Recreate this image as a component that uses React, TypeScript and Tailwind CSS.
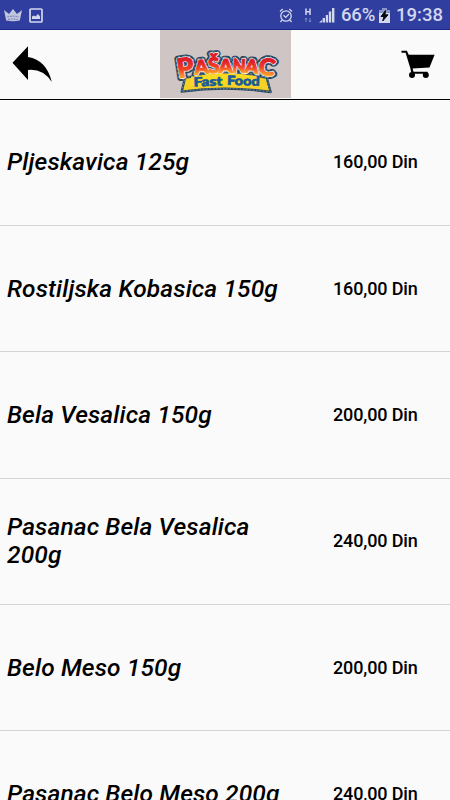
import React from "react";

interface MenuItem {
  name: string;
  price: string;
}

const items: MenuItem[] = [
  { name: "Pljeskavica 125g", price: "160,00 Din" },
  { name: "Rostiljska Kobasica 150g", price: "160,00 Din" },
  { name: "Bela Vesalica 150g", price: "200,00 Din" },
  { name: "Pasanac Bela Vesalica 200g", price: "240,00 Din" },
  { name: "Belo Meso 150g", price: "200,00 Din" },
  { name: "Pasanac Belo Meso 200g", price: "240,00 Din" },
];

// x, baseline, font size, drawn width, tilt
const letters = [
  { char: "P", x: 70, y: 147, size: 80, width: 50, tilt: -9 },
  { char: "A", x: 120, y: 138, size: 58, width: 42, tilt: -5 },
  { char: "Š", x: 160, y: 135, size: 64, width: 34, tilt: -2 },
  { char: "A", x: 191, y: 134, size: 56, width: 42, tilt: 0 },
  { char: "N", x: 232, y: 134, size: 56, width: 39, tilt: 3 },
  { char: "A", x: 268, y: 136, size: 56, width: 41, tilt: 6 },
  { char: "C", x: 307, y: 142, size: 70, width: 49, tilt: 9 },
];

const LogoLetters = (props: React.SVGProps<SVGGElement>) => (
  <g
    fontFamily="Lato, 'Open Sans', sans-serif"
    fontWeight="900"
    strokeLinejoin="round"
    {...props}
  >
    {letters.map((l, i) => (
      <text
        key={i}
        x={l.x}
        y={l.y}
        fontSize={l.size}
        textLength={l.width}
        lengthAdjust="spacingAndGlyphs"
        transform={`rotate(${l.tilt} ${l.x + l.width / 2} ${l.y})`}
      >
        {l.char}
      </text>
    ))}
  </g>
);

const Logo = () => (
  <svg className="h-[68px] w-[131px] bg-[#cec5c4]" viewBox="15 6 393 204">
    <defs>
      <linearGradient id="fire" x1="0" y1="0" x2="0" y2="1">
        <stop offset="0.3" stopColor="#dd1f2a" />
        <stop offset="0.55" stopColor="#ee3f28" />
        <stop offset="0.82" stopColor="#fca52c" />
      </linearGradient>
    </defs>
    <LogoLetters fill="#27475f" stroke="#27475f" strokeWidth="19" />
    <path
      d="M90 149Q210 126 335 149L347 192Q212 172 80 191Z"
      fill="#f5d027"
      stroke="#27475f"
      strokeWidth="7"
      strokeLinejoin="round"
    />
    <path
      d="M90 149Q210 126 335 149L347 192Q212 172 80 191Z"
      fill="none"
      stroke="#9aafb9"
      strokeWidth="2"
      strokeDasharray="5 5"
    />
    <LogoLetters
      fill="none"
      stroke="#7b929f"
      strokeWidth="13"
      strokeDasharray="5 7"
    />
    <LogoLetters fill="#fff" stroke="#fff" strokeWidth="7" />
    <LogoLetters fill="url(#fire)" stroke="url(#fire)" strokeWidth="3.5" />
    <path d="M108 146Q212 127 315 146L318 174Q212 164 106 175Z" fill="#f8d91f" />
    <g
      fontFamily="Lato, 'Open Sans', sans-serif"
      fontWeight="900"
      fontSize="38"
      fill="#17599a"
      stroke="#17599a"
      strokeWidth="2"
    >
      <text x="116" y="174" textLength="86" lengthAdjust="spacingAndGlyphs" transform="rotate(-2 160 174)">
        Fast
      </text>
      <text x="216" y="172" textLength="98" lengthAdjust="spacingAndGlyphs" transform="rotate(2 264 172)">
        Food
      </text>
    </g>
  </svg>
);

const StatusBar = () => (
  <div className="flex h-[30px] shrink-0 items-center justify-between border-b border-[#1a2787] bg-[#303f9f] text-[#d3d7ee]">
    <div className="flex items-center pt-px pl-1">
      <svg className="h-[13px] w-[18px]" viewBox="0 0 18 13">
        <path
          d="M0 1L5 5L9 0L13 5L18 1L15.8 11.5Q9 13 2.2 11.5Z"
          fill="#c1c6df"
        />
        <path
          d="M3.2 8Q9 6.3 14.8 8M4 10.5Q9 9.4 14 10.5"
          fill="none"
          stroke="#7a84b9"
          strokeWidth="1.1"
          strokeDasharray="2 .8"
        />
      </svg>
      <svg className="ml-[7px] h-[15px] w-[14px]" viewBox="0 0 14 15">
        <rect x="1" y="1" width="12" height="13" rx="1" fill="none" stroke="currentColor" strokeWidth="1.7" />
        <path d="M3 11V8.5L5 7.5L6.5 8.5L9 6L11 8.5V11Z" fill="currentColor" />
      </svg>
    </div>
    <div className="flex items-center pt-px pr-[7px]">
      <svg className="h-[15px] w-[14px]" viewBox="0 0 14 15" fill="none" stroke="currentColor" strokeWidth="1.3">
        <circle cx="7" cy="8" r="5.2" />
        <path d="M1 3.4L3.7 1.1M13 3.4L10.3 1.1M2.8 12.2L1.5 14M11.2 12.2L12.5 14M4.5 7.2L6.7 9.4L10 6" />
      </svg>
      <svg className="ml-[11px] h-4 w-2" viewBox="0 0 8 16">
        <path d="M2 1.5V8M6 1.5V8M2 4.7H6" fill="none" stroke="currentColor" strokeWidth="1.5" />
        <path d="M2 15V11M.8 12.2L2 11L3.2 12.2M6 11V15M4.8 13.8L6 15L7.2 13.8" fill="none" stroke="#7f8ac5" />
      </svg>
      <svg className="ml-[7px] h-4 w-4" viewBox="0 0 16 16" fill="currentColor">
        <path d="M0 15.5L3 13V15.5ZM3.6 15.5V11H6V15.5ZM6.8 15.5V8H9V15.5ZM9.8 15.5V4.5H12.2V15.5ZM13 15.5V1H15.4V15.5Z" />
      </svg>
      <span className="ml-[6px] w-[35px] text-[18.5px] leading-none font-medium tracking-[-0.2px]">66%</span>
      <svg className="ml-[3px] h-[15px] w-[11px]" viewBox="0 0 11 15">
        <path d="M3 0H8V2H11V15H0V2H3Z" fill="#d3d7ee" />
        <path d="M3 0H8V2H11V5H0V2H3Z" fill="#8b95c9" />
        <path d="M6.5 2.5L2 8.5H5L3.7 13L9 6.8H6Z" fill="#080a12" stroke="#080a12" />
      </svg>
      <span className="ml-[6px] w-[47px] text-[18.5px] leading-none font-medium">19:38</span>
    </div>
  </div>
);

const Header = () => (
  <header className="flex h-[70px] shrink-0 items-start justify-between border-b border-black">
    <div className="w-[160px] pt-4 pl-3">
      <svg className="h-[37px] w-10" viewBox="0 0 40 37">
        <path d="M.5 16.8L16 .3V11Q34.5 14 39.8 36Q31 22.5 16 24V34Z" />
      </svg>
    </div>
    <Logo />
    <div className="flex w-[159px] justify-end pt-5 pr-[15px]">
      <svg className="h-[29px] w-[34px]" viewBox="0 0 34 29">
        <path d="M.5 .8H5.9L7.7 4.7H33.6L28.5 17.5L11.6 18.6L12.5 21.8H26.5V23.7H10.5L9.6 19.2L4.6 2.7H.5Z" />
        <circle cx="11" cy="25" r="3" />
        <circle cx="24.8" cy="25" r="3" />
      </svg>
    </div>
  </header>
);

const MenuRow = ({ item }: { item: MenuItem }) => (
  <li className="flex h-[126.33px] shrink-0 items-center border-b border-[#d5d5d5] pl-[7px]">
    <div className="w-[326px] pr-[45px] text-[24.5px] leading-7 tracking-[0.12px] italic">
      {item.name}
    </div>
    <div className="text-lg leading-6 tracking-[-0.14px]">{item.price}</div>
  </li>
);

const App = () => {
  return (
    <div className="flex h-screen w-full flex-col overflow-hidden bg-[#fafafa] font-['Roboto',sans-serif] text-black">
      <StatusBar />
      <Header />
      <ul className="-mt-[0.4px] flex min-h-0 flex-1 flex-col overflow-hidden font-medium">
        {items.map((item) => (
          <MenuRow key={item.name} item={item} />
        ))}
      </ul>
    </div>
  );
};

export default App;
